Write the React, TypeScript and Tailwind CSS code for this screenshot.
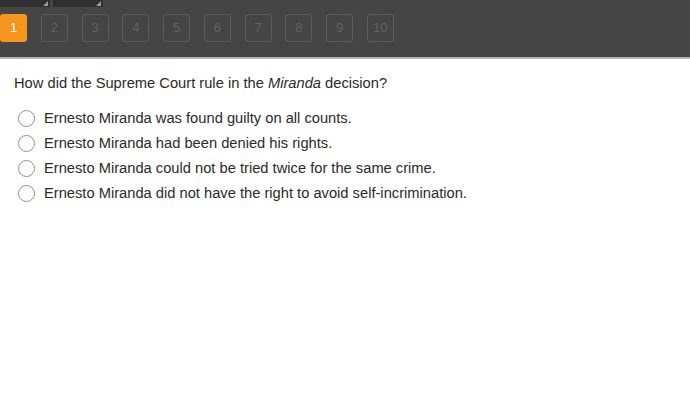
import React from "react";

const options = [
  "Ernesto Miranda was found guilty on all counts.",
  "Ernesto Miranda had been denied his rights.",
  "Ernesto Miranda could not be tried twice for the same crime.",
  "Ernesto Miranda did not have the right to avoid self-incrimination.",
];

const pages = [1, 2, 3, 4, 5, 6, 7, 8, 9, 10];

function Tab() {
  return (
    <div className="relative w-[50px] h-[7px] bg-[#2f2f2f]">
      <div className="absolute right-[2px] bottom-[1px] w-0 h-0 border-l-[5px] border-l-transparent border-b-[5px] border-b-[#9a9a9a]" />
    </div>
  );
}

export default function App() {
  return (
    <div className="w-[690px] h-[400px] bg-white font-['Liberation_Sans',Arial,sans-serif] overflow-hidden">
      {/* Header */}
      <div className="h-[57px] bg-[#454545] border-b-2 border-[#b4b4b4] box-content">
        <div className="flex gap-[3px]">
          <Tab />
          <Tab />
        </div>
        <div className="flex gap-[13.75px] mt-[7px]">
          {pages.map((p) =>
            p === 1 ? (
              <div
                key={p}
                className="w-[27px] h-[28px] rounded-[3px] bg-[#f7941d] text-white text-[13px] flex items-center justify-center"
              >
                {p}
              </div>
            ) : (
              <div
                key={p}
                className="w-[27px] h-[28px] rounded-[3px] border border-[#5c5c5c] text-[#616161] text-[13px] flex items-center justify-center"
              >
                {p}
              </div>
            )
          )}
        </div>
      </div>

      {/* Question */}
      <div className="pl-[14px] pt-[14px]">
        <p className="text-[14.7px] text-[#2a2a2a] leading-[20px]">
          How did the Supreme Court rule in the <i>Miranda</i> decision?
        </p>
        <div className="mt-[15px] flex flex-col gap-[5px] pl-[4px]">
          {options.map((o) => (
            <label key={o} className="flex items-center h-[20px] gap-[9px]">
              <span className="w-[17px] h-[17px] rounded-full border-[1.5px] border-[#8f8f8f] bg-white shrink-0" />
              <span className="text-[14.7px] text-[#2a2a2a]">{o}</span>
            </label>
          ))}
        </div>
      </div>
    </div>
  );
}
